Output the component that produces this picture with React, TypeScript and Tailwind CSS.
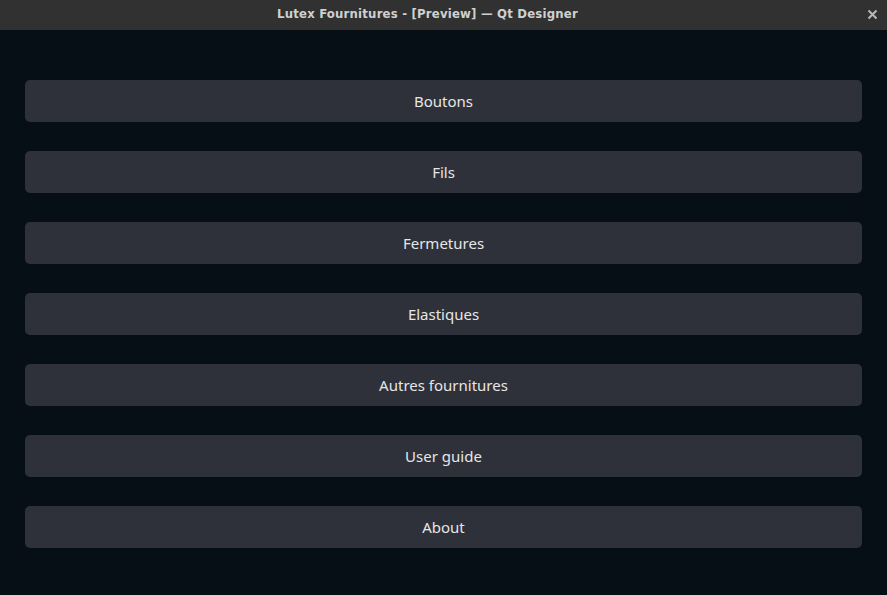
const items = ['Boutons', 'Fils', 'Fermetures', 'Elastiques', 'Autres fournitures', 'User guide', 'About'];

export default function App() {
  return (
    <div className="w-[887px] h-[595px] flex flex-col bg-[#060f16] overflow-hidden">
      <div className="relative h-[30px] flex items-center justify-center pr-[32px] pb-[2px] bg-[#313131] shrink-0">
        <span className="text-[13px] font-bold text-[#d0d0d0] tracking-[0.2px]" style={{ fontFamily: '"DejaVu Sans Condensed", "Liberation Sans", sans-serif' }}>
          Lutex Fournitures - [Preview] — Qt Designer
        </span>
        <svg className="absolute right-[9px] top-[9px]" width="11" height="11" viewBox="0 0 11 11">
          <path d="M1.5 1.5 L9.5 9.5 M9.5 1.5 L1.5 9.5" stroke="#b8b8b8" strokeWidth="2" />
        </svg>
      </div>
      <div className="flex flex-col gap-[29px] px-[25px] pt-[50px]">
        {items.map((label) => (
          <button
            key={label}
            className="h-[42px] w-full rounded-[5px] bg-[#2e3139] text-[15px] text-[#e6e6e6] flex items-center justify-center"
            style={{ fontFamily: '"Noto Sans", "Open Sans", sans-serif' }}
          >
            {label}
          </button>
        ))}
      </div>
    </div>
  );
}
